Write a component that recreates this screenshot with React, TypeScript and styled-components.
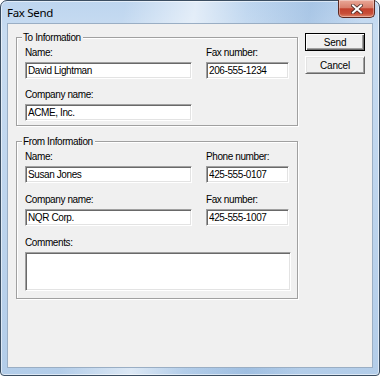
import React from "react";
import styled, { createGlobalStyle } from "styled-components";

const UI_FONT = `"Liberation Sans", Arial, sans-serif`;

const Global = createGlobalStyle`
  html, body { margin: 0; padding: 0; background: #ffffff; }
  body { width: 380px; height: 376px; overflow: hidden; }
`;

const Window = styled.div`
  box-sizing: border-box;
  width: 380px;
  height: 376px;
  border: 1px solid #3b4e62;
  border-radius: 7px 7px 4px 4px;
  padding: 0 6px 7px 6px;
  display: flex;
  flex-direction: column;
  background:
    linear-gradient(100deg, rgba(255,255,255,0) 28%, rgba(255,255,255,0.55) 44%, rgba(255,255,255,0) 56%, rgba(110,155,205,0.28) 70%, rgba(255,255,255,0) 82%),
    linear-gradient(180deg, #bdd5ef 0%, #c8dcf1 8%, #b3cde9 100%);
  box-shadow: inset 0 0 0 1px rgba(255, 255, 255, 0.55);
`;

const TitleBar = styled.div`
  height: 22px;
  flex: none;
  display: flex;
  align-items: center;
  justify-content: space-between;
`;

const Title = styled.span`
  font: 11.5px "Noto Sans", "Open Sans", sans-serif;
  color: #000;
  letter-spacing: -0.3px;
`;

const CloseButton = styled.div`
  align-self: flex-start;
  margin-top: -1px;
  margin-right: -2px;
  width: 37px;
  height: 18px;
  box-sizing: border-box;
  border: 1px solid #5b2820;
  border-top: none;
  border-radius: 0 0 5px 5px;
  background: linear-gradient(180deg, #e9a898 0%, #d9806d 45%, #c2402c 52%, #c84f39 80%, #de8468 100%);
  box-shadow: inset 0 0 0 1px rgba(255, 255, 255, 0.35);
  display: flex;
  align-items: center;
  justify-content: center;
`;

const Client = styled.div`
  flex: 1;
  box-sizing: border-box;
  background: #f0f0f0;
  border: 1px solid #9aaec4;
  display: grid;
  grid-template-columns: 282px 60px;
  column-gap: 7px;
  align-items: start;
  padding: 8px 0 0 8px;
  font: 10px ${UI_FONT};
  letter-spacing: -0.4px;
  color: #000;
`;

const Groups = styled.div`
  display: flex;
  flex-direction: column;
  gap: 10px;
`;

const Group = styled.fieldset<{ $pb: number }>`
  margin: 0;
  min-width: 0;
  padding: 3px 8px ${(p) => p.$pb}px 8px;
  border: 1px solid #a0a0a0;
  box-shadow: inset 1px 1px 0 #ffffff, 1px 1px 0 #ffffff;
`;

const Legend = styled.legend`
  margin-left: -3px;
  padding: 0 2px 0 1px;
  line-height: 13px;
  font: 10px ${UI_FONT};
  letter-spacing: -0.4px;
  background: #f0f0f0;
`;

const Fields = styled.div<{ $rowGap: number }>`
  display: grid;
  grid-template-columns: 167px 83px;
  column-gap: 14px;
  row-gap: ${(p) => p.$rowGap}px;
`;

const Field = styled.div<{ $span?: boolean }>`
  display: flex;
  flex-direction: column;
  gap: 3px;
  grid-column: ${(p) => (p.$span ? "1 / span 2" : "auto")};
`;

const Label = styled.label`
  line-height: 13px;
  height: 13px;
`;

const sunken = `
  box-sizing: border-box;
  border: 1px solid;
  border-color: #a0a0a0 #ffffff #ffffff #a0a0a0;
  box-shadow: inset 1px 1px 0 #696969, inset -1px -1px 0 #e3e3e3;
  background: #ffffff;
  color: #000;
  outline: none;
  margin: 0;
`;

const TextBox = styled.input`
  ${sunken}
  width: 100%;
  height: 17px;
  padding: 0 2px;
  font: 10px ${UI_FONT};
  letter-spacing: -0.4px;
`;

const Memo = styled.textarea`
  ${sunken}
  width: calc(100% + 2px);
  height: 39px;
  padding: 1px 2px;
  resize: none;
  font: 10px ${UI_FONT};
`;

const Buttons = styled.div`
  padding-top: 1px;
  display: flex;
  flex-direction: column;
  gap: 5px;
`;

const Button = styled.button<{ $default?: boolean }>`
  box-sizing: border-box;
  width: 60px;
  height: 18px;
  padding: 0;
  font: 10px ${UI_FONT};
  letter-spacing: -0.2px;
  color: #000;
  background: #f0f0f0;
  border: 1px solid;
  ${(p) =>
    p.$default
      ? `
    border-color: #000000;
    box-shadow: inset 1px 1px 0 #ffffff, inset -1px -1px 0 #696969, inset -2px -2px 0 #a0a0a0;
  `
      : `
    border-color: #ffffff #696969 #696969 #ffffff;
    box-shadow: inset 1px 1px 0 #e3e3e3, inset -1px -1px 0 #a0a0a0;
  `}
`;

function CloseGlyph() {
  return (
    <svg width="12" height="10" viewBox="0 0 12 10">
      <path d="M2 1.5 L10 8.5 M10 1.5 L2 8.5" stroke="#4a2a26" strokeWidth="3.6" strokeLinecap="square" />
      <path d="M2 1.5 L10 8.5 M10 1.5 L2 8.5" stroke="#ffffff" strokeWidth="2" strokeLinecap="square" />
    </svg>
  );
}

export default function App() {
  return (
    <>
      <Global />
      <Window>
        <TitleBar>
          <Title>Fax Send</Title>
          <CloseButton>
            <CloseGlyph />
          </CloseButton>
        </TitleBar>
        <Client>
          <Groups>
            <Group $pb={4}>
              <Legend>To Information</Legend>
              <Fields $rowGap={9}>
                <Field>
                  <Label>Name:</Label>
                  <TextBox readOnly value="David Lightman" />
                </Field>
                <Field>
                  <Label>Fax number:</Label>
                  <TextBox readOnly value="206-555-1234" />
                </Field>
                <Field>
                  <Label>Company name:</Label>
                  <TextBox readOnly value="ACME, Inc." />
                </Field>
              </Fields>
            </Group>
            <Group $pb={7}>
              <Legend>From Information</Legend>
              <Fields $rowGap={10}>
                <Field>
                  <Label>Name:</Label>
                  <TextBox readOnly value="Susan Jones" />
                </Field>
                <Field>
                  <Label>Phone number:</Label>
                  <TextBox readOnly value="425-555-0107" />
                </Field>
                <Field>
                  <Label>Company name:</Label>
                  <TextBox readOnly value="NQR Corp." />
                </Field>
                <Field>
                  <Label>Fax number:</Label>
                  <TextBox readOnly value="425-555-1007" />
                </Field>
                <Field $span>
                  <Label>Comments:</Label>
                  <Memo readOnly value="" />
                </Field>
              </Fields>
            </Group>
          </Groups>
          <Buttons>
            <Button $default>Send</Button>
            <Button>Cancel</Button>
          </Buttons>
        </Client>
      </Window>
    </>
  );
}
